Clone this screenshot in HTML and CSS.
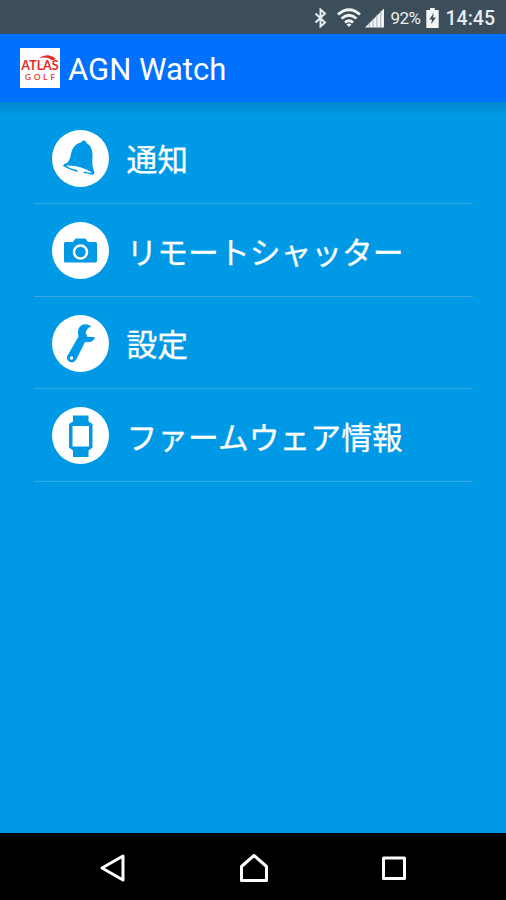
FILE: index.html
```html
<!DOCTYPE html>
<html lang="ja">
<head>
    <meta charset="UTF-8">
    <meta name="viewport" content="width=device-width, initial-scale=1.0">
    <title>AGN Watch</title>
    <link rel="stylesheet" href="styles.css">
</head>
<body>

    <!-- Status Bar -->
    <div class="status-bar">
        <svg class="bluetooth" width="14" height="20" viewBox="0 0 14 20">
            <path d="M1.5 5.5L11 14.5L6.5 18.5V1.5L11 5.5L1.5 14.5" fill="none" stroke="#e8edef" stroke-width="2"/>
        </svg>
        <svg class="wifi" width="24" height="20" viewBox="0 0 24 20">
            <g fill="none" stroke="#f2f5f6" stroke-width="2.7">
                <path d="M1 6.5Q12 -3 23 6.5"/>
                <path d="M4.5 10.5Q12 4 19.5 10.5"/>
                <path d="M8 14.5Q12 11 16 14.5"/>
            </g>
            <path d="M9.5 16.5Q12 14.5 14.5 16.5L12 19Z" fill="#f2f5f6"/>
        </svg>
        <svg class="signal" width="19" height="20" viewBox="0 0 20 20">
            <path d="M0 20L20 0V20Z" fill="#f2f5f6"/>
            <path d="M4.5 15V20M8.5 11V20M12.5 7V20M16.5 3V20" stroke="#a3adb3" stroke-width="1"/>
        </svg>
        <span class="percent">92%</span>
        <svg class="battery" width="13" height="20" viewBox="0 0 13 21">
            <path d="M4 0H9V2H13V21H0V2H4Z" fill="#f2f5f6"/>
            <path d="M8 5L3 12H6L5 17L10 10H7Z" fill="#3d4e5b"/>
        </svg>
        <span class="clock">14:45</span>
    </div>

    <!-- Header -->
    <header>
        <div class="logo">
            <svg class="swoosh" width="18" height="6" viewBox="0 0 18 6">
                <path d="M0 3Q9 -3 17 4L13 5.5Q9 1 0 3Z" fill="#e62a24"/>
            </svg>
            <span class="logo-name">ATLAS</span>
            <span class="logo-sub">GOLF</span>
        </div>
        <h1>AGN Watch</h1>
    </header>

    <!-- Menu -->
    <main>
        <ul class="menu">
            <li>
                <svg class="icon" viewBox="0 0 57 57">
                    <circle cx="28.5" cy="28.5" r="28.5" fill="#fff"/>
                    <path d="M29 12.5Q30 10 33 10.500L35 13.500Q40 16 40.500 24Q40 31 40.500 36L42.500 43Q42 46 35 43.500Q22 42.500 11 36Q11.500 33.500 15 33Q18 30 19 24Q21 14 29 12.500Z" fill="#0099e5"/>
                    <path d="M14 35.500Q27 34.500 40 42.500Q37 43.500 33 41.500Q31 44 27.500 43Q25 42 25 39.800Q18 39 14 35.500Z" fill="#fff"/>
                </svg>
                <span>通知</span>
            </li>
            <li>
                <svg class="icon" viewBox="0 0 57 57">
                    <circle cx="28.5" cy="28.5" r="28.5" fill="#fff"/>
                    <path d="M13.5 20H21L23.5 16.5H33.5L36 20H43.5Q45 20 45 21.5V39Q45 40.5 43.5 40.5H13.5Q12 40.5 12 39V21.5Q12 20 13.5 20Z" fill="#0099e5"/>
                    <circle cx="28.5" cy="30" r="6.5" fill="none" stroke="#fff" stroke-width="2.5"/>
                </svg>
                <span>リモートシャッター</span>
            </li>
            <li>
                <svg class="icon" viewBox="0 0 57 57">
                    <circle cx="28.5" cy="28.5" r="28.5" fill="#fff"/>
                    <path d="M39.5 11.5Q34 7.5 29 10.5Q24.5 14.5 26.5 21.5L15 41.500Q14.5 45.500 18 47Q21.5 48.500 24 45L33 27Q39.5 28.500 42.500 23.500V22H35.500L33.500 17.500L36 13Z" fill="#0099e5"/>
                    <circle cx="19.5" cy="43" r="1.7" fill="#fff"/>
                </svg>
                <span>設定</span>
            </li>
            <li>
                <svg class="icon" viewBox="0 0 57 57">
                    <circle cx="28.5" cy="28.5" r="28.5" fill="#fff"/>
                    <path d="M21 8.5H36.5V14.5L40.5 17V40.5L36.5 43.5V50H21V43.5L17 40.5V17L21 14.5Z" fill="#0099e5"/>
                    <rect x="20.5" y="19" width="16.5" height="20.5" fill="#fff"/>
                </svg>
                <span>ファームウェア情報</span>
            </li>
        </ul>
    </main>

    <!-- Navigation Bar -->
    <nav>
        <svg width="30" height="32" viewBox="0 0 30 32">
            <path d="M4 16L25 4V28Z"/>
        </svg>
        <svg width="30" height="32" viewBox="0 0 30 32">
            <path d="M2.5 28.5V14.5L15 3.5L27.5 14.5V28.5Z"/>
        </svg>
        <svg width="30" height="32" viewBox="0 0 30 32">
            <path d="M4.5 6H25.5V26.5H4.5Z"/>
        </svg>
    </nav>

</body>
</html>
```
FILE: styles.css
```css
/* Global Styles */
body {
    margin: 0;
    height: 900px;
    display: flex;
    flex-direction: column;
    overflow: hidden;
    background-color: #0099e5;
    color: #fff;
    font-family: Roboto, "Noto Sans CJK JP", sans-serif;
}

svg {
    display: block;
    flex-shrink: 0;
}

/* Status Bar */
.status-bar {
    height: 34px;
    box-sizing: border-box;
    padding: 2px 11px 0 0;
    display: flex;
    justify-content: flex-end;
    align-items: center;
    background-color: #3d4e5b;
    color: #e8edef;
}

.wifi {
    margin-left: 9px;
}

.signal {
    margin-left: 4px;
}

.percent {
    margin-left: 6px;
    font-size: 17px;
    letter-spacing: -0.5px;
}

.battery {
    margin-left: 5px;
}

.clock {
    margin-left: 7px;
    font-size: 19.5px;
    font-weight: 500;
}

/* Header */
header {
    height: 68px;
    box-sizing: border-box;
    padding-left: 20px;
    display: flex;
    align-items: center;
    background-color: #0070ff;
}

.logo {
    position: relative;
    width: 40px;
    height: 40px;
    display: flex;
    flex-direction: column;
    align-items: center;
    background-color: #fff;
    color: #e62a24;
    font-family: Lato, sans-serif;
}

.swoosh {
    position: absolute;
    left: 19px;
    top: 7px;
}

.logo-name {
    margin-top: 11px;
    font-size: 12.5px;
    line-height: 14px;
    font-weight: bold;
}

.logo-sub {
    margin: 0 -3px 0 0;
    font-size: 8px;
    line-height: 9px;
    letter-spacing: 3px;
    -webkit-text-stroke: 0.2px #e62a24;
}

h1 {
    margin: 3px 0 0 8px;
    font-size: 31px;
    font-weight: normal;
}

/* Menu */
main {
    flex: 1;
    padding: 9.5px 33px 0 34px;
    background: linear-gradient(#0088cc, #0099e5 14px);
}

.menu {
    list-style: none;
    margin: 0;
    padding: 0;
}

.menu li {
    height: 92.5px;
    box-sizing: border-box;
    padding: 1.5px 0 0 17.5px;
    display: flex;
    align-items: center;
    border-bottom: 1.5px solid #3ba9df;
    font-family: "Noto Sans CJK JP", sans-serif;
    font-size: 30.8px;
    line-height: 44px;
    -webkit-text-stroke: 0.3px #fff;
}

.icon {
    width: 57px;
    height: 57px;
    margin-right: 18px;
}

/* Navigation Bar */
nav {
    height: 67px;
    box-sizing: border-box;
    padding: 3px 97px 0 98px;
    display: flex;
    justify-content: space-between;
    align-items: center;
    background-color: #000;
}

nav path {
    fill: none;
    stroke: #fff;
    stroke-width: 3;
    stroke-linejoin: round;
}
```
